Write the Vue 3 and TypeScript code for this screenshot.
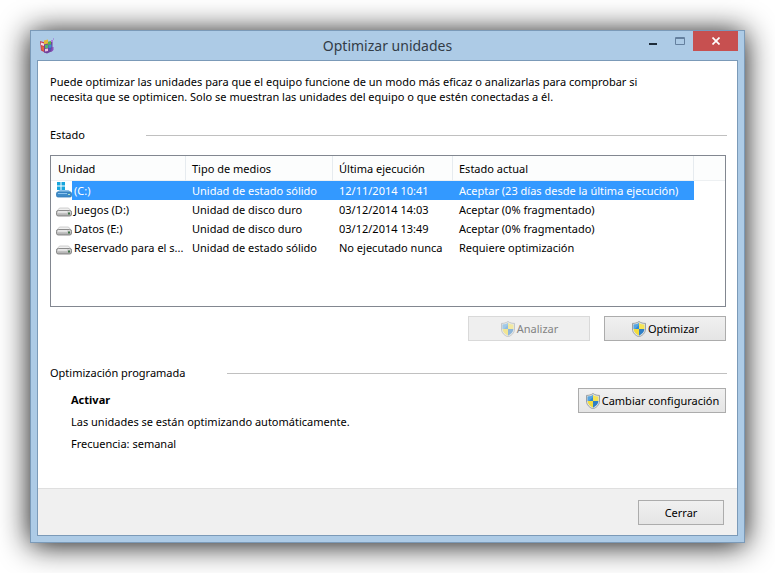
<script setup lang="ts">
import { ref } from 'vue'

interface Drive {
  name: string
  media: string
  lastRun: string
  status: string
  system?: boolean
}

const columns: string[] = ['Unidad', 'Tipo de medios', 'Última ejecución', 'Estado actual']

const drives: Drive[] = [
  {
    name: '(C:)',
    media: 'Unidad de estado sólido',
    lastRun: '12/11/2014 10:41',
    status: 'Aceptar (23 días desde la última ejecución)',
    system: true,
  },
  { name: 'Juegos (D:)', media: 'Unidad de disco duro', lastRun: '03/12/2014 14:03', status: 'Aceptar (0% fragmentado)' },
  { name: 'Datos (E:)', media: 'Unidad de disco duro', lastRun: '03/12/2014 13:49', status: 'Aceptar (0% fragmentado)' },
  {
    name: 'Reservado para el s...',
    media: 'Unidad de estado sólido',
    lastRun: 'No ejecutado nunca',
    status: 'Requiere optimización',
  },
]

const selected = ref<number>(0)
</script>

<template>
  <svg class="defs" width="0" height="0" aria-hidden="true">
    <defs>
      <clipPath id="shield-clip">
        <path d="M8 2C9.800 3.200 11.800 3.500 13.400 3.500V8c0 3-2.200 5-5.400 6.700C4.800 13 2.600 11 2.600 8V3.500C4.200 3.500 6.200 3.200 8 2z" />
      </clipPath>
      <symbol id="shield" viewBox="0 0 16 16">
        <path d="M8 .5C10 2 12.200 2.400 14.500 2.400V8c0 3.800-2.600 6.200-6.500 8C4.100 14.200 1.500 11.800 1.500 8V2.400C3.800 2.400 6 2 8 .5z" fill="#dfe4e4" stroke="#92979b" stroke-width=".9" />
        <g clip-path="url(#shield-clip)">
          <path d="M2 1h6v7H2z" fill="#2f8bd6" />
          <path d="M8 1h6v7H8z" fill="#f5e455" />
          <path d="M2 8h6v8H2z" fill="#f3dc3c" />
          <path d="M8 8h6v8H8z" fill="#2f7fc6" />
          <path d="M2.600 3.600L8 2v2L4 8H2.600z" fill="#7bbdec" opacity=".5" />
        </g>
      </symbol>
      <linearGradient id="disk-face" x1="0" y1="0" x2="0" y2="1">
        <stop offset="0" stop-color="#e2e2e2" />
        <stop offset="1" stop-color="#a8a8a8" />
      </linearGradient>
      <symbol id="disk" viewBox="0 0 16 16">
        <path d="M3.500 6h9l3 3.500H.5z" fill="#efefef" stroke="#b4b4b4" stroke-width=".6" />
        <rect x=".5" y="8.500" width="15" height="5.500" rx="1.800" fill="url(#disk-face)" stroke="#808080" stroke-width=".9" />
        <path d="M2 10h9" stroke="#f7f7f7" stroke-width="1" />
        <rect x="12" y="10.500" width="2" height="2" fill="#3f7146" />
      </symbol>
      <symbol id="system-disk" viewBox="0 0 16 16">
        <path d="M3.500 8h9l3 2.500H.5z" fill="#8ec3ec" />
        <rect x=".5" y="10" width="15" height="5" rx="1.500" fill="#3f8bc8" stroke="#2f78b6" stroke-width=".8" />
        <path d="M2 11.500h9" stroke="#8dc4ee" />
        <rect x="12" y="12" width="2" height="1" fill="#b5e6c0" />
        <path d="M1 0h3.500v3.500H1zM5.500 0H9v3.500H5.500zM1 4.500h3.500V8H1zM5.500 4.500H9V8H5.500z" fill="#16a5dd" />
      </symbol>
    </defs>
  </svg>

  <main class="desktop">
    <section class="window" aria-labelledby="window-title">
      <header class="titlebar">
        <svg class="app-icon" width="16" height="16" viewBox="0 0 16 16" aria-hidden="true">
          <path d="M1 3l5 1.500v10L2 12.500z" fill="#c33c55" />
          <path d="M2 4.500l3 1v2.500l-3-1z" fill="#f6dce2" />
          <path d="M2.500 8l3 1v4.500l-3-2z" fill="#e2663f" />
          <path d="M5 4l8.500-.5v9.500L8 15.500l-3-1z" fill="#71409b" />
          <path d="M5 2.500l4-1v4L5 6.500z" fill="#e5b936" />
          <path d="M9 4l3-1v3.500L9 7z" fill="#58b548" />
          <path d="M6 7l3-.5V10l-3 .5z" fill="#52b66a" />
          <path d="M9.500 7l3-.5v3l-3 .5z" fill="#3a91ce" />
          <path d="M6 11l3-.5V13l-3 .5z" fill="#edc7dd" />
          <path d="M10 10.500l2-.5v2l-2 .5z" fill="#435cb8" />
          <path d="M12 2h2v2h-2z" fill="#b27be0" />
          <path d="M13 9h1.500v3L12 14z" fill="#8a51bc" />
          <path d="M14 .5h1v1h-1z" fill="#9c62d6" />
        </svg>
        <h1 id="window-title">Optimizar unidades</h1>
        <div class="controls">
          <button type="button" class="control minimize" aria-label="Minimizar">
            <svg width="8" height="2" viewBox="0 0 8 2"><path d="M0 0h8v2H0z" fill="#1e2c3a" /></svg>
          </button>
          <button type="button" class="control maximize" aria-label="Maximizar" disabled>
            <svg width="10" height="8" viewBox="0 0 10 8"><path d="M.5.500h9v7h-9zM0 1.500h10" fill="none" stroke="#64809f" /></svg>
          </button>
          <button type="button" class="control close" aria-label="Cerrar ventana">
            <svg width="8" height="8" viewBox="0 0 8 8"><path d="M.5.500l7 7M7.500.500l-7 7" stroke="#fff" stroke-width="1.700" /></svg>
          </button>
        </div>
      </header>

      <div class="client">
        <div class="content">
          <p class="intro">
            Puede optimizar las unidades para que el equipo funcione de un modo más eficaz o analizarlas para comprobar si<br />
            necesita que se optimicen. Solo se muestran las unidades del equipo o que estén conectadas a él.
          </p>

          <h2 class="group status-group">Estado</h2>
          <div class="list">
            <table>
              <colgroup>
                <col class="col-drive" />
                <col class="col-media" />
                <col class="col-run" />
                <col class="col-status" />
                <col />
              </colgroup>
              <thead>
                <tr>
                  <th v-for="column in columns" :key="column" scope="col">{{ column }}</th>
                  <td class="filler"></td>
                </tr>
              </thead>
              <tbody>
                <tr
                  v-for="(drive, index) in drives"
                  :key="drive.name"
                  :class="{ selected: index === selected }"
                  @click="selected = index"
                >
                  <td class="drive">
                    <div class="drive-cell">
                      <svg width="16" height="16" aria-hidden="true">
                        <use :href="drive.system ? '#system-disk' : '#disk'" />
                      </svg>
                      <span class="drive-name">{{ drive.name }}</span>
                    </div>
                  </td>
                  <td>{{ drive.media }}</td>
                  <td>{{ drive.lastRun }}</td>
                  <td>{{ drive.status }}</td>
                  <td class="filler"></td>
                </tr>
              </tbody>
            </table>
          </div>

          <div class="actions">
            <button type="button" class="button wide" disabled>
              <svg width="16" height="16" aria-hidden="true"><use href="#shield" /></svg>Analizar
            </button>
            <button type="button" class="button wide">
              <svg width="16" height="16" aria-hidden="true"><use href="#shield" /></svg>Optimizar
            </button>
          </div>

          <h2 class="group schedule-group">Optimización programada</h2>
          <div class="schedule">
            <div class="schedule-text">
              <p><strong>Activar</strong></p>
              <p>Las unidades se están optimizando automáticamente.</p>
              <p>Frecuencia: semanal</p>
            </div>
            <button type="button" class="button settings">
              <svg width="16" height="16" aria-hidden="true"><use href="#shield" /></svg>Cambiar configuración
            </button>
          </div>
        </div>

        <footer class="footer">
          <button type="button" class="button done">Cerrar</button>
        </footer>
      </div>
    </section>
  </main>
</template>

<style>
body {
  margin: 0;
  background: #fff;
}
</style>

<style scoped>
* {
  box-sizing: border-box;
}

.defs {
  position: absolute;
}

.desktop {
  display: flex;
  min-height: 100vh;
  padding: 30px;
  font-family: 'Noto Sans', 'Open Sans', sans-serif;
  font-size: 11px;
  line-height: 15px;
  color: #000;
}

.window {
  display: flex;
  flex: 1;
  flex-direction: column;
  min-width: 0;
  padding: 0 6px 6px;
  border: 1px solid #7b9ab8;
  background: #adcbe6;
  box-shadow: 0 2px 28px rgba(0, 0, 0, 0.95);
}

.titlebar {
  display: grid;
  grid-template-columns: 1fr auto 1fr;
  height: 29px;
}

.app-icon {
  margin: 7px 0 0 2px;
}

h1 {
  margin: 0;
  font-size: 14px;
  font-weight: 400;
  line-height: 29px;
  color: #333c46;
}

.controls {
  display: flex;
  justify-content: flex-end;
  align-items: flex-start;
}

.control {
  display: flex;
  align-items: center;
  justify-content: center;
  width: 27px;
  height: 20px;
  padding: 0;
  border: 0;
  background: transparent;
}

.minimize {
  padding-top: 6px;
}

.close {
  width: 45px;
  background: #c75050;
}

.client {
  display: flex;
  flex: 1;
  flex-direction: column;
  border: 1px solid #7b9ab8;
  background: #fff;
}

.content {
  flex: 1;
  padding: 13px 10px 0 12px;
}

p {
  margin: 0;
}

.intro {
  white-space: nowrap;
}

.group {
  display: flex;
  align-items: center;
  margin: 0;
  font-size: 11px;
  font-weight: 400;
  line-height: 16px;
}

.group::after {
  content: '';
  flex: 1;
  height: 1px;
  background: #c0c0c0;
}

.status-group {
  gap: 61px;
  margin-top: 23px;
}

.schedule-group {
  gap: 42px;
  margin-top: 24px;
}

.list {
  height: 152px;
  margin: 12px 1px 0 0;
  border: 1px solid #828790;
}

table {
  width: 100%;
  table-layout: fixed;
  border-collapse: separate;
  border-spacing: 0;
}

.col-drive {
  width: 135px;
}

.col-media {
  width: 147px;
}

.col-run {
  width: 120px;
}

.col-status {
  width: 241px;
}

th,
td {
  overflow: hidden;
  height: 19px;
  padding: 0 0 0 6px;
  font-weight: 400;
  text-align: left;
  white-space: nowrap;
}

th,
thead .filler {
  height: 25px;
  border-bottom: 1px solid #edf0f2;
  background: #fcfdfd;
}

th {
  border-right: 1px solid #e6ebef;
}

th:first-child {
  padding-left: 7px;
}

td.drive {
  padding: 0 0 0 5px;
}

.drive-cell {
  display: flex;
  height: 19px;
}

.drive-cell svg {
  flex: none;
  margin-top: 2px;
}

.drive-name {
  flex: 1;
  overflow: hidden;
  padding-left: 2px;
  line-height: 19px;
  text-overflow: ellipsis;
}

.selected .drive-cell svg {
  margin-top: 1px;
}

.selected .drive-name,
.selected td:not(.drive):not(.filler) {
  background: #3399ff;
  color: #fff;
}

.actions {
  display: flex;
  justify-content: flex-end;
  gap: 14px;
  margin-top: 9px;
  padding-right: 1px;
}

.button {
  display: flex;
  align-items: center;
  justify-content: center;
  gap: 1px;
  height: 25px;
  padding: 0 4px;
  border: 1px solid #acacac;
  background: linear-gradient(#f0f0f0, #e5e5e5);
  font: inherit;
  color: #000;
  white-space: nowrap;
}

.button svg {
  flex: none;
}

.button:disabled {
  border-color: #d9d9d9;
  background: #efefef;
  color: #838383;
}

.button:disabled svg {
  opacity: 0.5;
}

.wide {
  width: 122px;
}

.schedule {
  display: flex;
  align-items: flex-start;
  justify-content: space-between;
  margin-top: 7px;
  padding: 0 1px 0 21px;
}

.schedule-text {
  display: grid;
  gap: 7px;
  padding-top: 4px;
}

.settings {
  width: 148px;
}

.footer {
  display: flex;
  justify-content: flex-end;
  padding: 11px 13px 10px;
  border-top: 1px solid #dfdfdf;
  background: #f0f0f0;
}

.done {
  width: 86px;
}
</style>
